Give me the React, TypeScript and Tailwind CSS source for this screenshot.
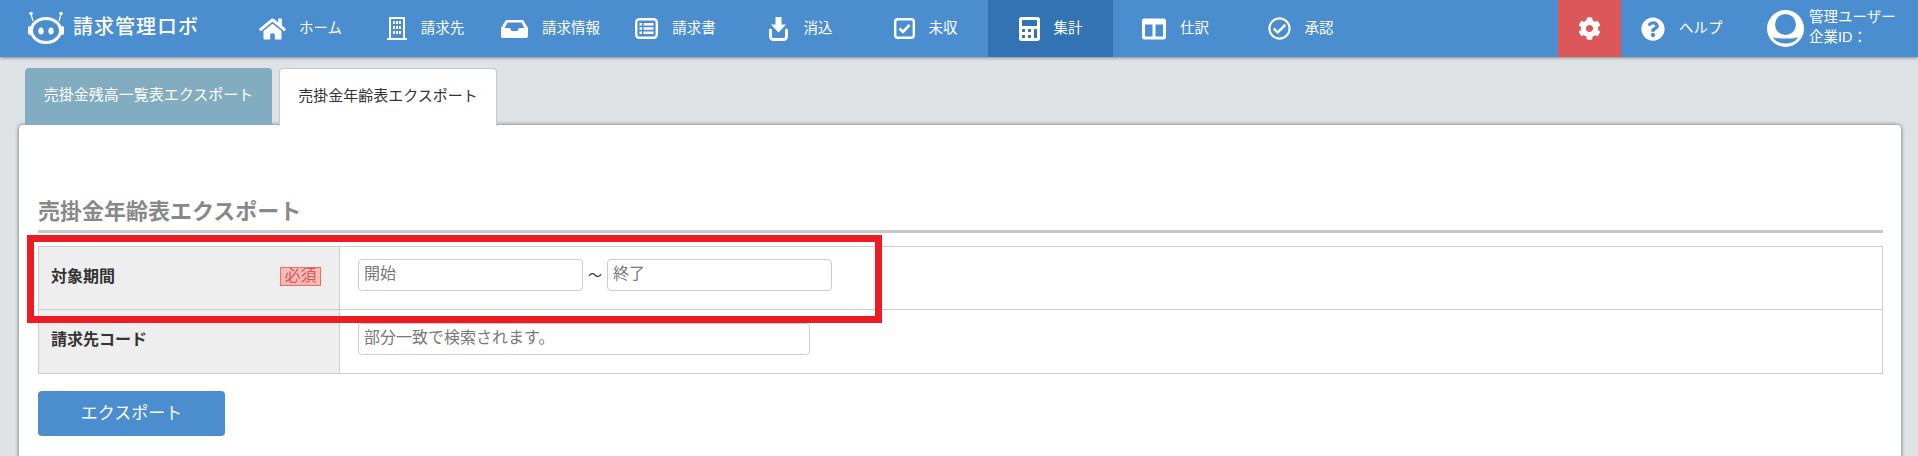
import { FaHome, FaCalculator, FaColumns, FaRegCheckCircle, FaCog, FaQuestionCircle } from "react-icons/fa";
import type { ReactNode } from "react";

const JP = "font-['Liberation_Sans','Noto_Sans_CJK_JP',sans-serif]";

function Logo() {
  return (
    <svg viewBox="0 0 36 33" className="h-[33px] w-[36px]" fill="none">
      <path d="M5 10 3 3M31 10l2-7" stroke="white" strokeWidth="1.2" />
      <circle cx="3" cy="2.5" r="1.8" fill="white" />
      <circle cx="33" cy="2.5" r="1.8" fill="white" />
      <rect x="0" y="15" width="4" height="9" rx="2" fill="white" />
      <rect x="32" y="15" width="4" height="9" rx="2" fill="white" />
      <ellipse cx="18" cy="19.500" rx="14.500" ry="12" stroke="white" strokeWidth="3" />
      <ellipse cx="13" cy="20" rx="2.600" ry="3.600" fill="white" />
      <ellipse cx="23" cy="20" rx="2.600" ry="3.600" fill="white" />
    </svg>
  );
}

function BuildingIcon() {
  return (
    <svg viewBox="0 0 20 23" className="h-[23px] w-[20px]" fill="white">
      <path fillRule="evenodd" d="M2 0h16v21h2v2H0v-2h2zM4 2v19h12V2z" />
      <path d="M6 4h2v3H6zM9 4h2v3H9zM12 4h2v3h-2zM6 9h2v3H6zM9 9h2v3H9zM12 9h2v3h-2zM6 14h2v3H6zM9 14h2v3H9zM12 14h2v3h-2z" />
    </svg>
  );
}

function InboxIcon() {
  return (
    <svg viewBox="0 0 27 18" className="h-[18px] w-[27px]" fill="white">
      <path
        fillRule="evenodd"
        d="M5 0h17l5 8v8a2 2 0 0 1-2 2H2a2 2 0 0 1-2-2V8zM6.500 2.500 3.500 8H9l1.500 3h6L18 8h5.500l-3-5.500z"
      />
    </svg>
  );
}

function ListIcon() {
  return (
    <svg viewBox="0 0 23 21" className="h-[21px] w-[23px]" fill="white">
      <rect x="1.200" y="1.200" width="20.600" height="18.600" rx="3" fill="none" stroke="white" strokeWidth="2.400" />
      <path d="M4.500 5h2.500v2.500H4.500zM8.500 5h10v2.500h-10zM4.500 9.300h2.500v2.500H4.500zM8.500 9.300h10v2.500h-10zM4.500 13.600h2.500v2.500H4.500zM8.500 13.600h10v2.500h-10z" />
    </svg>
  );
}

function DownloadIcon() {
  return (
    <svg viewBox="0 0 19 24" className="h-[24px] w-[19px]" fill="white">
      <path d="M6.500 0h6v7.500h4.500l-7.500 8-7.500-8h4.500z" />
      <path d="M1.500 13v6.500a3 3 0 0 0 3 3h10a3 3 0 0 0 3-3V13" fill="none" stroke="white" strokeWidth="3" strokeLinecap="round" />
    </svg>
  );
}

function CheckSquareIcon() {
  return (
    <svg viewBox="0 0 21 21" className="h-[21px] w-[21px]">
      <rect x="1.200" y="1.200" width="18.600" height="18.600" rx="2.500" fill="none" stroke="white" strokeWidth="2.400" />
      <path d="M5.500 10.500 9 14l6.500-7" fill="none" stroke="white" strokeWidth="2.600" />
    </svg>
  );
}

function UserIcon() {
  return (
    <svg viewBox="0 0 37 37" className="h-[37px] w-[37px]">
      <circle cx="18.500" cy="18.500" r="18.500" fill="white" />
      <circle cx="18.500" cy="14.500" r="10.500" fill="#4a8ecf" />
      <path d="M6 27c3.500 1.800 7.500 1.500 12.500 1.500S27.500 28.800 31 27c-1.500 4-6 6.500-12.500 6.500S7.500 31 6 27z" fill="#4a8ecf" />
    </svg>
  );
}

const navItems: { label: string; icon: ReactNode; gap: string; active?: boolean }[] = [
  { label: "ホーム", icon: <FaHome className="h-[24px] w-[27px]" />, gap: "gap-[13px]" },
  { label: "請求先", icon: <BuildingIcon />, gap: "gap-3.5" },
  { label: "請求情報", icon: <InboxIcon />, gap: "gap-3.5" },
  { label: "請求書", icon: <ListIcon />, gap: "gap-3.5" },
  { label: "消込", icon: <DownloadIcon />, gap: "gap-4" },
  { label: "未収", icon: <CheckSquareIcon />, gap: "gap-3.5" },
  { label: "集計", icon: <FaCalculator className="h-[24px] w-[21px]" />, gap: "gap-3.5", active: true },
  { label: "仕訳", icon: <FaColumns className="h-[24px] w-[24px]" />, gap: "gap-3.5" },
  { label: "承認", icon: <FaRegCheckCircle className="h-[23px] w-[23px]" />, gap: "gap-3.5" },
];

export default function App() {
  return (
    <div className={`h-[456px] overflow-hidden bg-[#dfe3e6] ${JP}`}>
      <header className="relative z-20 flex h-[57px] bg-[#4a8ecf] text-white shadow-[0_1px_3px_rgba(0,0,0,0.4)]">
        <div className="flex w-[238px] items-center gap-[9px] pl-7">
          <div className="pb-[3px]">
            <Logo />
          </div>
          <span className="pb-[3px] text-xl leading-none font-medium tracking-[1px] whitespace-nowrap">請求管理ロボ</span>
        </div>
        {navItems.map((item) => (
          <a
            key={item.label}
            className={`flex w-[125px] items-center justify-center text-[14.500px] ${item.gap} ${item.active ? "bg-[#3173b3]" : ""}`}
          >
            {item.icon}
            <span className="whitespace-nowrap">{item.label}</span>
          </a>
        ))}
        <div className="flex-1" />
        <div className="flex w-[63px] items-center justify-center bg-[#dc5759]">
          <FaCog className="h-[23px] w-[23px]" />
        </div>
        <div className="flex w-[146px] items-center gap-3.5 pl-5">
          <FaQuestionCircle className="h-[24px] w-[24px]" />
          <span className="text-[14.500px]">ヘルプ</span>
        </div>
        <div className="flex w-[151px] items-center gap-[5px]">
          <UserIcon />
          <div className="pb-[3px] text-[14.500px] leading-5 whitespace-nowrap">
            <div>管理ユーザー</div>
            <div>企業ID：</div>
          </div>
        </div>
      </header>

      <div className="relative z-10 flex h-[68px] items-start gap-[7px] pl-[25px] pt-[11px] text-[15px]">
        <div className="flex h-[57px] w-[247px] items-center justify-center rounded-t bg-[#82adc1] pb-[3px] text-white">
          売掛金残高一覧表エクスポート
        </div>
        <div className="relative z-10 flex h-[58px] w-[218px] items-center justify-center rounded-t border border-b-0 border-[#c8c8c8] bg-white pb-[3px] text-[#333]">
          売掛金年齢表エクスポート
        </div>
      </div>

      <main className="relative ml-[19px] mr-[17px] h-[340px] rounded bg-white pl-[19px] pr-[18px] pt-[75px] shadow-[0_0_4px_rgba(0,0,0,0.55)]">
        <h2 className="h-[33px] border-b-[3px] border-[#c8c8c8] text-[22px] leading-[24px] font-bold text-[#888]">
          売掛金年齢表エクスポート
        </h2>
        <div className="mt-[13px] border border-[#ccc] text-[#333]">
          <div className="flex h-[63px] border-b border-[#ccc]">
            <div className="flex w-[301px] items-center justify-between border-r border-[#ccc] bg-[#eee] pl-3 pr-[18px] pb-[3px] text-base font-bold">
              <span>対象期間</span>
              <span className="h-[19px] w-[41px] border border-[#f66] bg-[#f5bdb5] text-center text-base leading-[16px] font-normal text-[#dc5759]">必須</span>
            </div>
            <div className="flex items-start pl-[18px] pt-[12px]">
              <input readOnly placeholder="開始" className="h-8 w-[225px] rounded border border-[#ccc] pl-[5px] pb-0.5 text-base placeholder:text-[#777]" />
              <span className="w-6 text-center text-sm leading-8">～</span>
              <input readOnly placeholder="終了" className="h-8 w-[225px] rounded border border-[#ccc] pl-[5px] pb-0.5 text-base placeholder:text-[#777]" />
            </div>
          </div>
          <div className="flex h-[63px]">
            <div className="flex w-[301px] items-center border-r border-[#ccc] bg-[#eee] pl-3 pb-[4px] text-base font-bold">
              請求先コード
            </div>
            <div className="pl-[18px] pt-[13px]">
              <input readOnly placeholder="部分一致で検索されます。" className="h-8 w-[452px] rounded border border-[#ccc] pl-[5px] pb-0.5 text-base placeholder:text-[#777]" />
            </div>
          </div>
        </div>
        <button className="mt-[17px] h-[45px] w-[187px] rounded bg-[#4a8ecf] text-[17px] text-white">エクスポート</button>

        {/* annotation from the manual */}
        <div className="pointer-events-none absolute left-[8px] top-[110px] h-[88px] w-[855px] border-[7px] border-[#ed1c24]" />
      </main>
    </div>
  );
}
